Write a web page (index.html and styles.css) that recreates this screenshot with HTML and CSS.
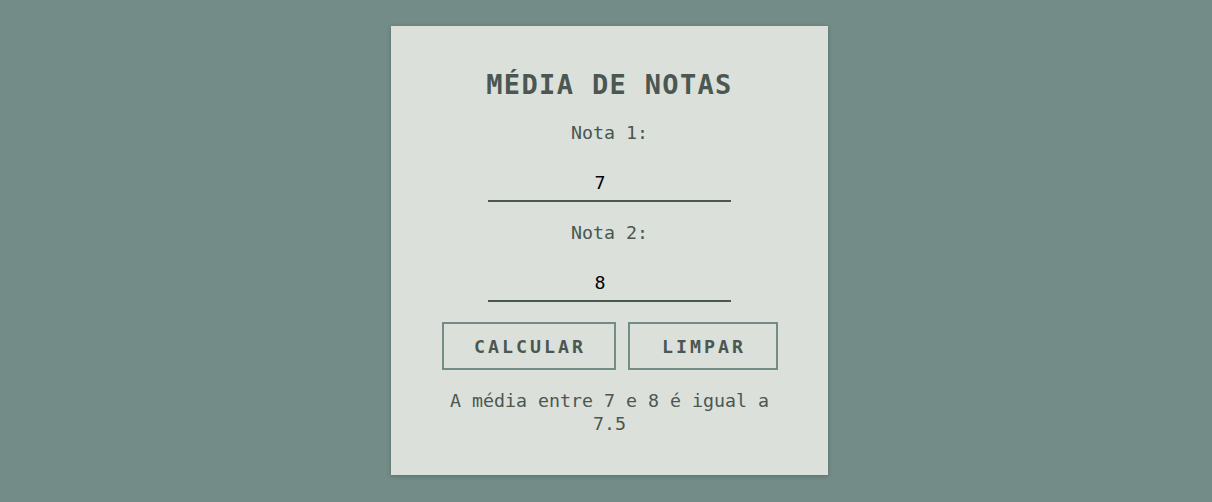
FILE: index.html
```html
<!DOCTYPE html>
<html lang="pt">
<head>
<meta charset="utf-8">
<title>Média de notas</title>
<link rel="stylesheet" href="styles.css">
</head>
<body>
<main class="card">
  <h1 class="title">MÉDIA DE NOTAS</h1>
  <label class="label" for="n1">Nota 1:</label>
  <input class="field" id="n1" type="text" value="7">
  <label class="label second" for="n2">Nota 2:</label>
  <input class="field" id="n2" type="text" value="8">
  <div class="actions">
    <button class="btn btn-calc" type="button">CALCULAR</button>
    <button class="btn btn-clear" type="button">LIMPAR</button>
  </div>
  <p class="result">A média entre 7 e 8 é igual a 7.5</p>
</main>
</body>
</html>
```

FILE: styles.css
```css
html, body {
  margin: 0;
  padding: 0;
}
body {
  background: #738c87;
  min-height: 502px;
  display: flex;
  justify-content: center;
  align-items: flex-start;
  padding-top: 26px;
  padding-left: 7px;
  box-sizing: border-box;
  font-family: "DejaVu Sans Mono", "Liberation Mono", monospace;
  color: #4b5751;
}
.card {
  width: 437px;
  height: 449px;
  box-sizing: border-box;
  background: #dbe0db;
  box-shadow: 0 1px 4px rgba(40, 55, 50, 0.35);
  display: flex;
  flex-direction: column;
  align-items: center;
  padding-top: 43px;
}
.title {
  margin: 0;
  font-size: 27px;
  line-height: 32px;
  font-weight: bold;
  letter-spacing: 1.35px;
  color: #4b5751;
}
.label {
  margin-top: 21px;
  font-size: 18.3px;
  line-height: 22px;
  color: #4b5751;
}
.label.second {
  margin-top: 20px;
}
.field {
  margin-top: 16px;
  width: 243px;
  height: 42px;
  box-sizing: border-box;
  padding: 4px 19px 0 0;
  border: none;
  border-bottom: 2px solid #4b5751;
  background: transparent;
  font-family: "DejaVu Sans Mono", "Liberation Mono", monospace;
  font-size: 18.3px;
  line-height: 22px;
  color: #000;
  text-align: center;
  outline: none;
}
.actions {
  margin-top: 20px;
  display: flex;
  gap: 12px;
}
.btn {
  height: 48px;
  box-sizing: border-box;
  border: 2px solid #738c87;
  background: transparent;
  font-family: "DejaVu Sans Mono", "Liberation Mono", monospace;
  font-size: 18.3px;
  font-weight: bold;
  letter-spacing: 3px;
  color: #4b5751;
  padding: 0 0 0 3px;
}
.btn-calc {
  width: 174px;
}
.btn-clear {
  width: 150px;
}
.result {
  margin: 19px 0 0;
  max-width: 334px;
  text-align: center;
  font-size: 18.3px;
  line-height: 23px;
  color: #4b5751;
}
```
